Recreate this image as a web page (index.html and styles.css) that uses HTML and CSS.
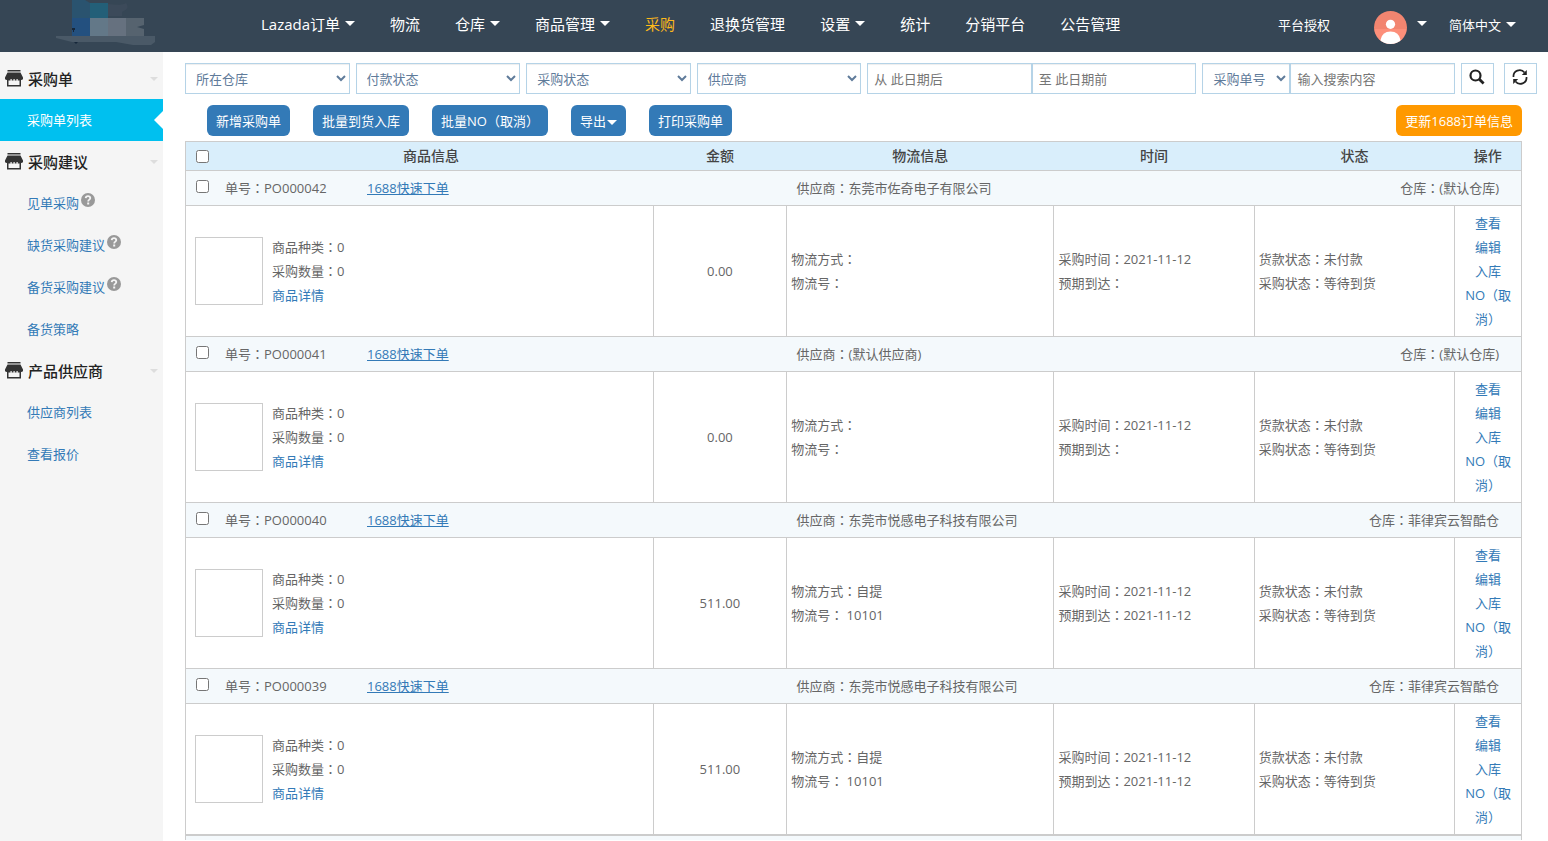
FILE: index.html
```html
<!DOCTYPE html>
<html lang="zh-CN">
<head>
<meta charset="utf-8">
<title>采购单列表</title>
<link rel="stylesheet" href="styles.css">
</head>
<body>
<svg class="defs" aria-hidden="true">
  <symbol id="store" viewBox="0 0 18 17">
    <path fill="#333" d="M2.500 0h13v1.500h-13zM2.500 2.500h13L18 7.500v1.500q-.5 1-2 1v6.500H2V10Q.5 10 0 9V7.500z"/>
    <path fill="#f5f5f5" d="M3.500 10.500h11V15h-11zM5.500 9h1.200v1.500H5.500zM8.500 9h1.200v1.500H8.500zM11.500 9h1.200v1.500h-1.200z"/>
  </symbol>
  <symbol id="help" viewBox="0 0 14 14">
    <circle cx="7" cy="7" r="7" fill="#999"/>
    <path d="M4.700 5.200Q4.900 3.200 7 3.200T9.300 5.100Q9.300 6.100 8.200 6.700 7.200 7.200 7.200 8.500" fill="none" stroke="#f5f5f5" stroke-width="1.800"/>
    <rect x="6.200" y="9.500" width="2" height="2" fill="#f5f5f5"/>
  </symbol>
</svg>

<header class="topbar">
  <a class="logo" href="#" aria-label="首页">
    <svg width="110" height="52" viewBox="0 0 110 52">
      <path fill="#3c4a5a" d="M58 4q14 2 18-1 5 5-4 9v4H58z"/>
      <path fill="#2a536f" d="M22 0h13l5 3v15H22z"/>
      <path fill="#235f78" d="M40 3h18v15H40z"/>
      <path fill="#23507f" d="M22 18h18v18H22z"/>
      <path fill="#637888" d="M40 18h18v18H40z"/>
      <path fill="#66717f" d="M58 18h18v18H58z"/>
      <path fill="#56636f" d="M76 18h18v7l-7 2 7 2v7H76z"/>
      <path fill="#4a5967" d="M6 36h99v6l-4 3H83l-17-3H22l-16-4z"/>
      <path fill="#15263a" d="M22 28h3v2h-1v2h-1v-2h-1zM24 42h4l-2 2z"/>
    </svg>
  </a>
  <nav class="nav">
    <a class="caret" href="#">Lazada订单</a>
    <a href="#">物流</a>
    <a class="caret" href="#">仓库</a>
    <a class="caret" href="#">商品管理</a>
    <a class="active" href="#">采购</a>
    <a href="#">退换货管理</a>
    <a class="caret" href="#">设置</a>
    <a href="#">统计</a>
    <a href="#">分销平台</a>
    <a href="#">公告管理</a>
  </nav>
  <div class="account">
    <a href="#">平台授权</a>
    <a class="user caret" href="#" aria-label="账户">
      <svg width="33" height="33" viewBox="0 0 33 33">
        <clipPath id="disc"><circle cx="16.500" cy="16.500" r="16.500"/></clipPath>
        <g clip-path="url(#disc)">
          <rect width="33" height="18" fill="#f28570"/>
          <rect y="18" width="33" height="15" fill="#fd8f7a"/>
          <circle cx="16.500" cy="13.300" r="4.600" fill="#fff"/>
          <path fill="#fff" d="M6.500 33v-4q1.500-8.500 10-8.500t10 8.500v4z"/>
        </g>
      </svg>
    </a>
    <a class="caret" href="#">简体中文</a>
  </div>
</header>

<div class="layout">
  <aside class="sidebar">
    <h2><svg class="store"><use href="#store"/></svg>采购单</h2>
    <ul>
      <li class="current"><a href="#">采购单列表</a></li>
    </ul>
    <h2><svg class="store"><use href="#store"/></svg>采购建议</h2>
    <ul>
      <li><a href="#">见单采购</a><svg class="help"><use href="#help"/></svg></li>
      <li><a href="#">缺货采购建议</a><svg class="help"><use href="#help"/></svg></li>
      <li><a href="#">备货采购建议</a><svg class="help"><use href="#help"/></svg></li>
      <li><a href="#">备货策略</a></li>
    </ul>
    <h2><svg class="store"><use href="#store"/></svg>产品供应商</h2>
    <ul>
      <li><a href="#">供应商列表</a></li>
      <li><a href="#">查看报价</a></li>
    </ul>
  </aside>

  <main class="content">
    <form class="filters">
      <select class="field" aria-label="所在仓库"><option>所在仓库</option></select>
      <select class="field" aria-label="付款状态"><option>付款状态</option></select>
      <select class="field" aria-label="采购状态"><option>采购状态</option></select>
      <select class="field" aria-label="供应商"><option>供应商</option></select>
      <div class="joined">
        <input class="field" type="text" placeholder="从 此日期后" aria-label="开始日期">
        <input class="field" type="text" placeholder="至 此日期前" aria-label="结束日期">
      </div>
      <select class="field short" aria-label="搜索类型"><option>采购单号</option></select>
      <input class="field" type="text" placeholder="输入搜索内容" aria-label="搜索内容">
      <button class="tool" type="button" aria-label="搜索">
        <svg width="16" height="16" viewBox="0 0 16 16" fill="none" stroke="#222"><circle cx="6.500" cy="6.500" r="5" stroke-width="2.200"/><path d="M10.300 10.300l4.300 4.200" stroke-width="2.800"/></svg>
      </button>
      <button class="tool refresh" type="button" aria-label="刷新">
        <svg width="16" height="16" viewBox="0 0 16 16" fill="none" stroke="#222" stroke-width="1.700"><path d="M1.500 8A6.200 6.200 0 0 1 12.500 3.500M14.500 8A6.200 6.200 0 0 1 3.500 12.500"/><path d="M14.800 1v5H9.800zM1.200 15v-5h5z" fill="#222" stroke="none"/></svg>
      </button>
    </form>

    <div class="actions">
      <button type="button">新增采购单</button>
      <button type="button">批量到货入库</button>
      <button type="button"><span class="mid" lang="zh-Hant">批量NO（取消）</span></button>
      <button type="button" class="drop">导出</button>
      <button type="button">打印采购单</button>
      <button type="button" class="update">更新1688订单信息</button>
    </div>

    <table class="orders">
      <colgroup>
        <col class="c-goods"><col class="c-sum"><col class="c-ship"><col class="c-time"><col class="c-state"><col class="c-ops">
      </colgroup>
      <thead>
        <tr>
          <th><div class="first"><input type="checkbox" aria-label="全选"><span>商品信息</span></div></th>
          <th>金额</th><th>物流信息</th><th>时间</th><th>状态</th><th>操作</th>
        </tr>
      </thead>
      <tbody id="rows"></tbody>
    </table>
  </main>
</div>
<script src="orders.js"></script>
</body>
</html>
```
FILE: styles.css
```css
* { box-sizing: border-box; }

body {
  margin: 0;
  min-height: 100vh;
  display: flex;
  flex-direction: column;
  font: 13px/24px "Open Sans", "Noto Sans CJK SC", sans-serif;
  color: #666;
  background: #fff;
}

a { color: #337ab7; text-decoration: none; }
button, input, select { font: inherit; margin: 0; }
.defs { position: absolute; width: 0; height: 0; }
.mid { font-family: "Open Sans", "Noto Sans CJK TC", sans-serif; }

.caret::after,
.drop::after {
  content: "";
  display: inline-block;
  border: 5px solid transparent;
  border-top-color: currentColor;
  border-bottom: 0;
  vertical-align: middle;
}

/* Top bar */
.topbar {
  display: flex;
  align-items: center;
  height: 52px;
  padding: 0 32px 0 50px;
  background: #364655;
}
.topbar a { color: #fff; white-space: nowrap; }
.logo, .logo svg { display: block; }
.nav {
  display: flex;
  gap: 35px;
  margin-left: 101px;
  padding-bottom: 4px;
  font-size: 15px;
}
.nav .caret::after { margin: 0 0 4px 5px; }
.nav .active { color: #fdb91a; }
.account {
  display: flex;
  align-items: center;
  margin-left: auto;
  padding-bottom: 2px;
}
.user { display: flex; align-items: center; margin: 4px 22px 0 44px; }
.account .caret::after { margin: 0 0 4px 5px; }
.account .user::after { margin: 0 0 8px 10px; }

/* Sidebar */
.layout { display: flex; flex: 1; }
.sidebar {
  flex: 0 0 163px;
  padding-top: 6px;
  background: #f5f5f5;
}
.sidebar h2 {
  display: flex;
  align-items: center;
  height: 41px;
  margin: 0;
  padding: 0 5px;
  font-size: 15px;
  font-weight: 500;
  color: #222;
}
.sidebar h2::after {
  content: "";
  margin-left: auto;
  border: 4px solid transparent;
  border-top-color: #ddd;
  border-bottom: 0;
}
.store { width: 18px; height: 17px; margin-right: 5px; }
.sidebar ul { margin: 0; padding: 0; list-style: none; }
.sidebar li {
  display: flex;
  align-items: center;
  height: 42px;
  padding-left: 27px;
}
.help { width: 14px; height: 14px; margin: 0 0 6px 2px; }
.sidebar .current { background: #00c0ef; }
.current a { color: #fff; }
.current::after {
  content: "";
  margin-left: auto;
  border: 9px solid transparent;
  border-right-color: #fff;
  border-left: 0;
}

/* Filters */
.content { flex: 1; min-width: 0; padding: 11px 11px 0 22px; }
.filters {
  display: grid;
  grid-template-columns: repeat(4, minmax(0, 1fr)) minmax(0, 2fr) 82px minmax(0, 1fr) 33px 37px;
  gap: 6px;
}
.joined { display: grid; grid-template-columns: 1fr 1fr; }
.field {
  min-width: 0;
  height: 31px;
  padding: 0 6px;
  color: #5f7b9a;
  background: #fff;
  border: 1px solid #b5d3e7;
  border-radius: 0;
  box-shadow: inset 0 1px 1px rgba(0, 0, 0, 0.07);
}
/* Reaches across the grid gap to join the search box. */
.short { margin-right: -6px; }
.field::placeholder { color: #757575; opacity: 1; }
.tool {
  display: grid;
  place-items: center;
  width: 33px;
  height: 31px;
  padding: 0 0 4px;
  background: #fff;
  border: 1px solid #b5d3e7;
}
.refresh { justify-self: end; }

/* Action buttons */
.actions {
  display: flex;
  gap: 23px;
  padding: 11px 15px 5px 22px;
}
.actions button {
  height: 31px;
  padding: 0 9px;
  color: #fff;
  background: #337ab7;
  border: 0;
  border-radius: 6px;
  white-space: nowrap;
}
.drop::after { margin-left: 1px; }
.actions .update { margin-left: auto; background: #ff9900; }

/* Orders */
.orders {
  width: calc(100% - 15px);
  table-layout: fixed;
  border-collapse: collapse;
  border: 1px solid #ccc;
  border-bottom: 0;
}
.c-goods { width: 35%; }
.c-sum { width: 10%; }
.c-ship { width: 20%; }
.c-time, .c-state { width: 15%; }
.c-ops { width: 5%; }
.orders th {
  height: 29px;
  padding: 0;
  font-size: 14px;
  font-weight: 500;
  color: #444;
  background: #d9eefb;
}
.first { display: flex; align-items: center; padding-left: 10px; }
.first span { flex: 1; }
.orders input { width: 13px; height: 13px; }
.orders td { padding: 5px 4px; border: 1px solid #ccc; }
.orders .group {
  padding: 0;
  background: #f4f9fc;
}
.bar {
  display: grid;
  grid-template-columns: minmax(0, 611fr) minmax(0, 725fr);
  align-items: center;
  height: 34px;
}
.bar-left { display: flex; align-items: center; padding-left: 10px; }
.bar-left input { margin: 0 16px 4px 0; }
.number { flex: 0 0 142px; }
.bar-left a { text-decoration: underline; }
.bar-right {
  display: flex;
  justify-content: space-between;
  padding-right: 22px;
}
.goods { display: flex; align-items: center; gap: 9px; padding-left: 5px; }
.thumb { width: 68px; height: 68px; border: 1px solid #ccc; }
.orders .sum, .orders .ops { text-align: center; }
.ops a { display: block; }
.orders .rest { height: 5px; padding: 0; border-top-width: 2px; border-bottom: 0; }
```
FILE: orders.js
```js
const orders = [
  { no: "PO000042", supplier: "东莞市佐奇电子有限公司", store: "(默认仓库)", sum: "0.00", ship: "", track: "", due: "" },
  { no: "PO000041", supplier: "(默认供应商)", store: "(默认仓库)", sum: "0.00", ship: "", track: "", due: "" },
  { no: "PO000040", supplier: "东莞市悦感电子科技有限公司", store: "菲律宾云智酷仓", sum: "511.00", ship: "自提", track: " 10101", due: "2021-11-12" },
  { no: "PO000039", supplier: "东莞市悦感电子科技有限公司", store: "菲律宾云智酷仓", sum: "511.00", ship: "自提", track: " 10101", due: "2021-11-12" }
];

// Full-width punctuation is centred in its cell.
const mid = (s) => `<span class="mid" lang="zh-Hant">${s}</span>`;
const pair = (label, value) => `${label}${mid("：")}${value}`;
const line = (label, value) => `<div>${pair(label, value)}</div>`;

document.getElementById("rows").innerHTML = orders.map((o) => `
  <tr><td class="group" colspan="6"><div class="bar">
    <div class="bar-left">
      <input type="checkbox" aria-label="${o.no}">
      <span class="number">${pair("单号", o.no)}</span>
      <a href="#">1688快速下单</a>
    </div>
    <div class="bar-right">
      <span>${pair("供应商", o.supplier)}</span>
      <span>${pair("仓库", o.store)}</span>
    </div>
  </div></td></tr>
  <tr>
    <td><div class="goods"><div class="thumb"></div><div>
      ${line("商品种类", 0)}${line("采购数量", 0)}<a href="#">商品详情</a>
    </div></div></td>
    <td class="sum">${o.sum}</td>
    <td>${line("物流方式", o.ship)}${line("物流号", o.track)}</td>
    <td>${line("采购时间", "2021-11-12")}${line("预期到达", o.due)}</td>
    <td>${line("货款状态", "未付款")}${line("采购状态", "等待到货")}</td>
    <td class="ops"><a href="#">查看</a><a href="#">编辑</a><a href="#">入库</a><a href="#">${mid("NO（取消）")}</a></td>
  </tr>`).join("") + '<tr><td class="group rest" colspan="6"></td></tr>';
```
